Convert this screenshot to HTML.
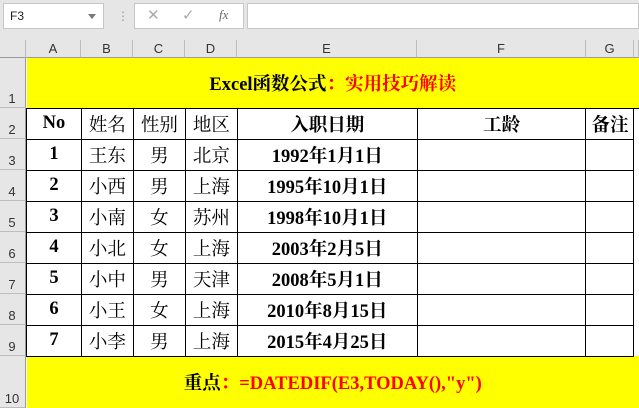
<!DOCTYPE html>
<html><head><meta charset="utf-8"><style>
*{margin:0;padding:0;box-sizing:border-box}
body{width:639px;height:408px;overflow:hidden;background:#fff;position:relative;font-family:"Liberation Sans",sans-serif}
.top{position:absolute;left:0;top:0;width:639px;height:40px;background:#e6e6e6}
.nb{position:absolute;left:3px;top:3px;width:101px;height:26px;background:#fff;border:1px solid #c6c6c6;font-size:12px;padding:5px 6px;color:#222}
.nb:after{content:"";position:absolute;right:7px;top:10px;border:4px solid transparent;border-top:5px solid #777}
.fx{position:absolute;left:134px;top:3px;width:110px;height:26px;background:#fff;border:1px solid #c6c6c6;color:#aaa;font-size:15px}
.fb{position:absolute;left:247px;top:3px;width:392px;height:26px;background:#fff;border:1px solid #c6c6c6}
.ch{position:absolute;top:40px;height:18px;background:#e6e6e6;border-right:1px solid #bdbdbd;border-bottom:1px solid #9b9b9b;font-size:13px;text-align:center;line-height:18px;color:#333}
.rh{position:absolute;left:0;width:26px;background:#e6e6e6;border-bottom:1px solid #bdbdbd;border-right:1px solid #9b9b9b;font-size:13px;color:#333;text-align:center}
.rh span{position:absolute;bottom:0;left:0;width:24px;line-height:16px}
table{position:absolute;left:26px;top:58px;border-collapse:collapse;table-layout:fixed}
td{border:1.5px solid #000;text-align:center;font-family:"Liberation Serif","Noto Serif CJK SC","Noto Serif CJK JP",serif;font-size:18.5px;font-weight:bold;height:31px;padding:0;color:#000;white-space:nowrap;overflow:visible}
td.n{font-weight:normal}
.y{background:#ff0;border:none;border-bottom:1.5px solid #000}
.r{color:#f00}
</style></head><body>
<div class="top"></div>
<div class="nb">F3</div>
<div style="position:absolute;left:117px;top:9px;color:#999;font-size:12px">⋮</div>
<div class="fx"><span style="position:absolute;left:12px;top:2px">✕</span><span style="position:absolute;left:47px;top:2px">✓</span><span style="position:absolute;left:84px;top:3px;font-family:'Liberation Serif',serif;font-style:italic;color:#666;font-size:13px">fx</span></div>
<div class="fb"></div>
<div class="ch" style="left:0;width:26px"></div>
<div class="ch" style="left:26px;width:55px">A</div>
<div class="ch" style="left:81px;width:52px">B</div>
<div class="ch" style="left:133px;width:52px">C</div>
<div class="ch" style="left:185px;width:52px">D</div>
<div class="ch" style="left:237px;width:180px">E</div>
<div class="ch" style="left:417px;width:169px">F</div>
<div class="ch" style="left:586px;width:48px">G</div>
<div class="ch" style="left:634px;width:5px"></div>
<div class="rh" style="top:58px;height:50px"><span>1</span></div>
<div class="rh" style="top:108px;height:31px"><span>2</span></div>
<div class="rh" style="top:139px;height:31px"><span>3</span></div>
<div class="rh" style="top:170px;height:31px"><span>4</span></div>
<div class="rh" style="top:201px;height:31px"><span>5</span></div>
<div class="rh" style="top:232px;height:31px"><span>6</span></div>
<div class="rh" style="top:263px;height:31px"><span>7</span></div>
<div class="rh" style="top:294px;height:31px"><span>8</span></div>
<div class="rh" style="top:325px;height:31px"><span>9</span></div>
<div class="rh" style="top:356px;height:52px"><span>10</span></div>
<table>
<colgroup><col style="width:55px"><col style="width:52px"><col style="width:52px"><col style="width:52px"><col style="width:180px"><col style="width:169px"><col style="width:48px"><col style="width:5px"></colgroup>
<tr><td colspan="8" class="y" style="height:50px">Excel函数公式<span class="r">：实用技巧解读</span></td></tr>
<tr><td>No</td><td class="n">姓名</td><td class="n">性别</td><td class="n">地区</td><td>入职日期</td><td>工龄</td><td>备注</td><td style="border:none"></td></tr>
<tr><td>1</td><td class="n">王东</td><td class="n">男</td><td class="n">北京</td><td>1992年1月1日</td><td></td><td></td><td style="border:none"></td></tr>
<tr><td>2</td><td class="n">小西</td><td class="n">男</td><td class="n">上海</td><td>1995年10月1日</td><td></td><td></td><td style="border:none"></td></tr>
<tr><td>3</td><td class="n">小南</td><td class="n">女</td><td class="n">苏州</td><td>1998年10月1日</td><td></td><td></td><td style="border:none"></td></tr>
<tr><td>4</td><td class="n">小北</td><td class="n">女</td><td class="n">上海</td><td>2003年2月5日</td><td></td><td></td><td style="border:none"></td></tr>
<tr><td>5</td><td class="n">小中</td><td class="n">男</td><td class="n">天津</td><td>2008年5月1日</td><td></td><td></td><td style="border:none"></td></tr>
<tr><td>6</td><td class="n">小王</td><td class="n">女</td><td class="n">上海</td><td>2010年8月15日</td><td></td><td></td><td style="border:none"></td></tr>
<tr><td>7</td><td class="n">小李</td><td class="n">男</td><td class="n">上海</td><td>2015年4月25日</td><td></td><td></td><td style="border:none"></td></tr>
<tr><td colspan="8" class="y" style="height:52px;border-bottom:none">重点<span class="r">：=DATEDIF(E3,TODAY(),"y")</span></td></tr>
</table>
</body></html>
